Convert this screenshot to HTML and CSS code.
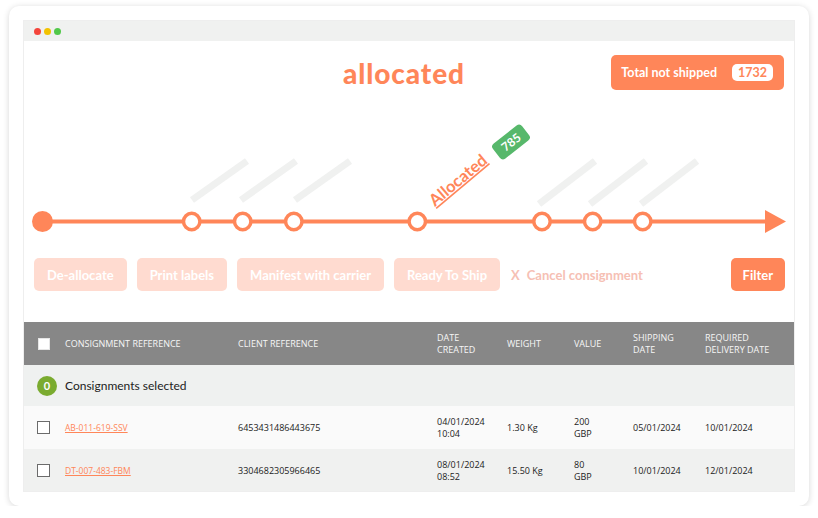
FILE: index.html
```html
<!DOCTYPE html>
<html lang="en">
<head>
<meta charset="utf-8">
<title>Allocated consignments</title>
<link rel="stylesheet" href="styles.css">
</head>
<body>
<div class="card">
  <div class="window">
    <div class="titlebar">
      <span class="dot dot-red"></span>
      <span class="dot dot-yellow"></span>
      <span class="dot dot-green"></span>
    </div>
    <div class="hero">
      <div class="hero-head">
        <div></div>
        <h1 class="title">allocated</h1>
        <div class="total">Total not shipped <span class="total-count">1732</span></div>
      </div>
      <svg class="timeline" width="770" height="150" viewBox="0 0 770 150">
        <g class="ghost" stroke="#f0f1f0" stroke-width="7">
          <line x1="168" y1="110" x2="223" y2="71"/>
          <line x1="217" y1="110" x2="272" y2="71"/>
          <line x1="271" y1="110" x2="326" y2="71"/>
          <line x1="515" y1="114" x2="571" y2="71"/>
          <line x1="566" y1="114" x2="622" y2="71"/>
          <line x1="617" y1="114" x2="673" y2="71"/>
        </g>
        <line x1="18" y1="131.5" x2="745" y2="131.5" stroke="#ff8659" stroke-width="4"/>
        <polygon points="741,120 762,131.5 741,143" fill="#ff8659"/>
        <circle cx="18.5" cy="131.5" r="10.5" fill="#ff8659"/>
        <g fill="#fff" stroke="#ff8659" stroke-width="3.5">
          <circle cx="167.7" cy="131.5" r="8.2"/>
          <circle cx="218.7" cy="131.5" r="8.2"/>
          <circle cx="269.8" cy="131.5" r="8.2"/>
          <circle cx="393.3" cy="131.5" r="8.2"/>
          <circle cx="518" cy="131.5" r="8.2"/>
          <circle cx="568.7" cy="131.5" r="8.2"/>
          <circle cx="618.7" cy="131.5" r="8.2"/>
        </g>
        <text class="stage-label" transform="translate(411 117) rotate(-40)">Allocated</text>
        <g transform="translate(487 52) rotate(-38)">
          <rect x="-18.5" y="-9.5" width="37" height="19" rx="4" fill="#57b86b"/>
          <text class="stage-count" x="0" y="4.5" text-anchor="middle">785</text>
        </g>
      </svg>
      <div class="actions">
        <button class="btn btn-faded">De-allocate</button>
        <button class="btn btn-faded">Print labels</button>
        <button class="btn btn-faded">Manifest with carrier</button>
        <button class="btn btn-faded">Ready To Ship</button>
        <span class="cancel"><span class="cancel-x">X</span>Cancel consignment</span>
        <button class="btn btn-filter">Filter</button>
      </div>
    </div>
    <div class="table">
      <div class="row row-head">
        <div class="cell cell-check"><span class="check check-head"></span></div>
        <div class="cell">CONSIGNMENT REFERENCE</div>
        <div class="cell">CLIENT REFERENCE</div>
        <div class="cell">DATE<br>CREATED</div>
        <div class="cell">WEIGHT</div>
        <div class="cell">VALUE</div>
        <div class="cell">SHIPPING<br>DATE</div>
        <div class="cell">REQUIRED<br>DELIVERY DATE</div>
      </div>
      <div class="selected">
        <span class="selected-count">0</span>
        <span class="selected-text">Consignments selected</span>
      </div>
      <div class="row row-data row-odd">
        <div class="cell cell-check"><span class="check"></span></div>
        <div class="cell"><a class="ref" href="#">AB-011-619-SSV</a></div>
        <div class="cell">6453431486443675</div>
        <div class="cell">04/01/2024<br>10:04</div>
        <div class="cell">1.30 Kg</div>
        <div class="cell">200<br>GBP</div>
        <div class="cell">05/01/2024</div>
        <div class="cell">10/01/2024</div>
      </div>
      <div class="row row-data row-even">
        <div class="cell cell-check"><span class="check"></span></div>
        <div class="cell"><a class="ref" href="#">DT-007-483-FBM</a></div>
        <div class="cell">3304682305966465</div>
        <div class="cell">08/01/2024<br>08:52</div>
        <div class="cell">15.50 Kg</div>
        <div class="cell">80<br>GBP</div>
        <div class="cell">10/01/2024</div>
        <div class="cell">12/01/2024</div>
      </div>
    </div>
  </div>
</div>
</body>
</html>
```

FILE: styles.css
```css
* { box-sizing: border-box; }

html, body {
  margin: 0;
  padding: 0;
  background: #ffffff;
}

body {
  font-family: "Lato", "Liberation Sans", sans-serif;
  color: #222;
}

.card {
  margin: 6px 0 0 9px;
  width: 800px;
  height: 500px;
  padding: 15px;
  background: #fff;
  border-radius: 10px;
  box-shadow: 0 1px 6px rgba(0, 0, 0, 0.16);
}

.window {
  width: 770px;
  height: 470px;
  overflow: hidden;
  background: #fff;
  box-shadow: 0 0 0 1px #eeeeee;
}

.titlebar {
  height: 20px;
  background: #f0f1f0;
  display: flex;
  align-items: center;
  gap: 3px;
  padding-left: 10px;
}

.dot {
  width: 7px;
  height: 7px;
  border-radius: 50%;
}
.dot-red { background: #f4453b; }
.dot-yellow { background: #f2c200; }
.dot-green { background: #52c84a; }

.hero {
  padding-bottom: 31px;
}

.hero-head {
  display: grid;
  grid-template-columns: 1fr auto 1fr;
  align-items: center;
  height: 35px;
  margin-top: 14px;
  padding-right: 10px;
}

.title {
  margin: 0;
  font-size: 28px;
  font-weight: 900;
  color: #ff8659;
  letter-spacing: 0.9px;
  line-height: 1;
}

.total {
  justify-self: end;
  height: 35px;
  display: flex;
  align-items: center;
  gap: 15px;
  padding: 0 11px 0 10px;
  background: #ff8659;
  border-radius: 5px;
  color: #fff;
  font-size: 12.5px;
  font-weight: 700;
}

.total-count {
  display: inline-flex;
  align-items: center;
  justify-content: center;
  width: 41px;
  height: 17px;
  background: #fff;
  color: #ff8659;
  border-radius: 5px;
  font-size: 12.5px;
  font-weight: 700;
}

.timeline {
  display: block;
}

.stage-label {
  font-family: "Lato", "Liberation Sans", sans-serif;
  font-size: 16.5px;
  font-weight: 700;
  fill: #ff8659;
  text-decoration: underline;
}

.stage-count {
  font-family: "Lato", "Liberation Sans", sans-serif;
  font-size: 12px;
  font-weight: 700;
  fill: #fff;
}

.actions {
  display: flex;
  align-items: center;
  margin-top: 18px;
  padding: 0 9px 0 10px;
  gap: 10px;
}

.btn {
  height: 33px;
  border: 0;
  border-radius: 5px;
  font-family: "Lato", "Liberation Sans", sans-serif;
  font-size: 13px;
  font-weight: 700;
  color: #fff;
  padding: 0 13px;
}

.btn-faded {
  background: #ffdbd0;
}

.btn-filter {
  margin-left: auto;
  background: #ff8659;
  font-size: 13px;
  padding: 0 12px;
}

.cancel {
  margin-left: 1px;
  color: #f6c0b4;
  font-size: 13px;
  font-weight: 700;
  display: flex;
  align-items: center;
}

.cancel-x {
  margin-right: 7px;
  font-size: 13px;
}

.table {
  font-family: "Open Sans", "Liberation Sans", sans-serif;
}

.row {
  display: grid;
  grid-template-columns: 41px 173px 199px 70px 67px 59px 72px 89px;
  align-items: center;
}

.row-head {
  height: 43px;
  background: #878787;
  color: #f6f6f6;
  font-size: 9px;
  line-height: 11.5px;
}

.row-data {
  height: 43px;
  font-size: 9px;
  line-height: 11.5px;
  color: #222;
}

.row-odd { background: #fafafa; }
.row-even { background: #f0f1f0; }

.cell-check {
  padding-left: 13px;
  display: flex;
  align-items: center;
}

.check {
  width: 13px;
  height: 13px;
  border: 1.5px solid #6b6b6b;
  background: #fff;
}

.check-head {
  margin-left: 1px;
  width: 12px;
  height: 12px;
  border: 1px solid #e6e6e6;
}

.ref {
  color: #ff8659;
  text-decoration: underline;
  font-size: 8.5px;
}

.selected {
  height: 41px;
  background: #eff1f0;
  display: flex;
  align-items: center;
  padding-left: 13px;
  gap: 8px;
  font-family: "Lato", "Liberation Sans", sans-serif;
}

.selected-count {
  width: 20px;
  height: 20px;
  border-radius: 50%;
  background: #7aab2f;
  color: #fff;
  font-size: 11px;
  font-weight: 700;
  display: inline-flex;
  align-items: center;
  justify-content: center;
}

.selected-text {
  font-size: 12px;
  color: #222;
}
```
